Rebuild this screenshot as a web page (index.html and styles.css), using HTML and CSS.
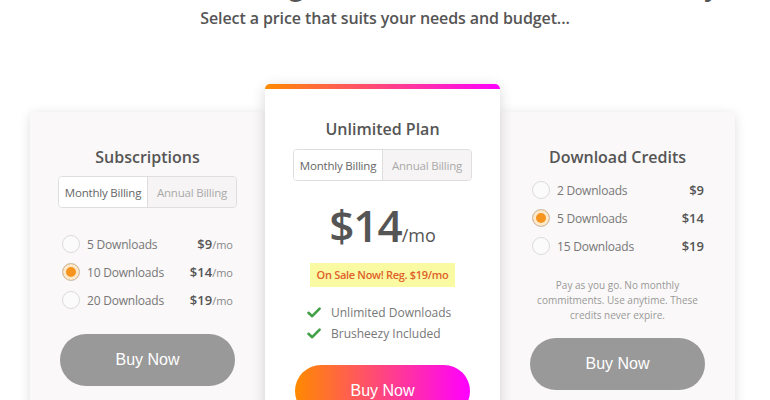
FILE: index.html
```html
<!DOCTYPE html>
<html>
<head>
<meta charset="utf-8">
<link rel="stylesheet" href="styles.css">
</head>
<body>
<header class="intro">
  <h1 class="title">Our Flexible Pricing Plans for Creative Teams Today</h1>
  <p class="subtitle">Select a price that suits your needs and budget...</p>
</header>
<main class="plans">
  <section class="card side">
    <h2 class="card-title">Subscriptions</h2>
    <div class="toggle">
      <span class="seg active">Monthly Billing</span>
      <span class="seg">Annual Billing</span>
    </div>
    <ul class="options">
      <li class="option"><span class="radio"></span><span class="label">5 Downloads</span><span class="price"><b>$9</b><small>/mo</small></span></li>
      <li class="option"><span class="radio on"></span><span class="label">10 Downloads</span><span class="price"><b>$14</b><small>/mo</small></span></li>
      <li class="option"><span class="radio"></span><span class="label">20 Downloads</span><span class="price"><b>$19</b><small>/mo</small></span></li>
    </ul>
    <button class="buy gray">Buy Now</button>
  </section>

  <section class="card featured">
    <div class="bar"></div>
    <h2 class="card-title">Unlimited Plan</h2>
    <div class="toggle">
      <span class="seg active">Monthly Billing</span>
      <span class="seg">Annual Billing</span>
    </div>
    <div class="big-price"><span class="amount">$14</span><span class="per">/mo</span></div>
    <div class="sale">On Sale Now! Reg. $19/mo</div>
    <ul class="features">
      <li><svg class="check" viewBox="0 0 14 11" width="14" height="11"><path d="M1.5 5.8 L5.2 9.2 L12.6 1.6" fill="none" stroke="#43a047" stroke-width="2.6" stroke-linecap="round" stroke-linejoin="round"/></svg>Unlimited Downloads</li>
      <li><svg class="check" viewBox="0 0 14 11" width="14" height="11"><path d="M1.5 5.8 L5.2 9.2 L12.6 1.6" fill="none" stroke="#43a047" stroke-width="2.6" stroke-linecap="round" stroke-linejoin="round"/></svg>Brusheezy Included</li>
    </ul>
    <button class="buy grad">Buy Now</button>
  </section>

  <section class="card side">
    <h2 class="card-title">Download Credits</h2>
    <ul class="options credits">
      <li class="option"><span class="radio"></span><span class="label">2 Downloads</span><span class="price"><b>$9</b></span></li>
      <li class="option"><span class="radio on"></span><span class="label">5 Downloads</span><span class="price"><b>$14</b></span></li>
      <li class="option"><span class="radio"></span><span class="label">15 Downloads</span><span class="price"><b>$19</b></span></li>
    </ul>
    <p class="note">Pay as you go. No monthly commitments. Use anytime. These credits never expire.</p>
    <button class="buy gray">Buy Now</button>
  </section>
</main>
</body>
</html>
```

FILE: styles.css
```css
* { box-sizing: border-box; }
html, body { margin: 0; padding: 0; background: #fff; }
body {
  font-family: "Open Sans", "Noto Sans", sans-serif;
  color: #555;
  overflow: hidden;
  height: 400px;
}
.intro { text-align: center; }
.title {
  margin: -28px 0 0 0;
  height: 26px;
  font-size: 27px;
  font-weight: 600;
  line-height: 26px;
  color: #555;
  white-space: nowrap;
}
.subtitle {
  margin: 9px 0 0 0;
  font-size: 16px;
  font-weight: 600;
  line-height: 22px;
  color: #555;
  letter-spacing: -0.1px;
}
.plans {
  display: flex;
  align-items: flex-start;
  width: 705px;
  margin: 55px 0 0 30px;
}
.card {
  width: 235px;
  flex: none;
  text-align: center;
}
.side {
  margin-top: 28px;
  background: #faf8f8;
  border-radius: 4px;
  box-shadow: 0 2px 12px rgba(0,0,0,0.13);
  padding: 34px 28px 40px;
  height: 330px;
}
.featured {
  position: relative;
  z-index: 2;
  background: #fff;
  border-radius: 5px;
  box-shadow: 0 3px 14px rgba(0,0,0,0.16);
  padding: 0 28px 40px;
  height: 360px;
}
.bar {
  height: 5px;
  margin: 0 -28px;
  border-radius: 5px 5px 0 0;
  background: linear-gradient(90deg, #ff8a00, #f0f);
}
.card-title {
  margin: 0;
  font-size: 16px;
  font-weight: 600;
  line-height: 22px;
  color: #555;
}
.featured .card-title { margin-top: 29px; }
.toggle {
  display: flex;
  margin: 9px 0 0;
  border: 1px solid #dedede;
  border-radius: 4px;
  height: 32px;
  overflow: hidden;
}
.side .toggle { margin-top: 8px; }
.seg {
  flex: 1;
  display: flex;
  align-items: center;
  justify-content: center;
  font-size: 11.5px;
  color: #aaa;
  background: #f6f4f4;
  letter-spacing: -0.2px;
}
.seg.active {
  background: #fff;
  color: #666;
  border-right: 1px solid #dedede;
}
.options {
  list-style: none;
  margin: 22px 0 0;
  padding: 0 4px 0 4px;
}
.options.credits { margin-top: 8px; padding-right: 3px; }
.option {
  display: flex;
  align-items: center;
  height: 28px;
}
.radio {
  width: 18px;
  height: 18px;
  border-radius: 50%;
  border: 1px solid #dcdcdc;
  background: #fbfbfb;
  flex: none;
  margin-right: 7px;
}
.radio.on {
  border-color: #c9c2ba;
  background: #f7941d;
  box-shadow: inset 0 0 0 3px #fde9cc;
}
.label {
  flex: 1;
  text-align: left;
  font-size: 12px;
  color: #777;
  letter-spacing: -0.2px;
}
.price { color: #555; font-size: 13px; }
.price b { font-weight: 600; }
.price small { font-size: 11px; color: #888; }
.note {
  margin: 18px 0 0;
  font-size: 10px;
  line-height: 15px;
  color: #999;
  padding: 0 4px;
}
.buy {
  display: block;
  width: 175px;
  height: 52px;
  margin: 0 auto;
  border: 0;
  border-radius: 26px;
  color: #fff;
  font-family: "Liberation Sans", Arial, sans-serif;
  font-size: 16px;
}
.side .buy { margin-top: 20px; }
.side .note + .buy { margin-top: 15px; }
.gray { background: #999; }
.grad { background: linear-gradient(90deg, #ff8a00, #f0f); margin-top: 21px; }
.big-price {
  margin-top: 18px;
  line-height: 52px;
  color: #555;
}
.amount { font-size: 44px; font-weight: 600; letter-spacing: -1px; }
.per { font-size: 18px; color: #555; }
.sale {
  display: inline-block;
  margin-top: -1px;
  padding: 0 7px;
  height: 24px;
  line-height: 24px;
  background: #fafaa2;
  color: #e0602a;
  font-size: 11px;
  font-weight: 600;
  letter-spacing: -0.3px;
}
.features {
  list-style: none;
  margin: 15px 0 0;
  padding: 0 0 0 14px;
  text-align: left;
}
.features li {
  display: flex;
  align-items: center;
  height: 21px;
  font-size: 12px;
  color: #777;
}
.check { margin-right: 10px; }
```
